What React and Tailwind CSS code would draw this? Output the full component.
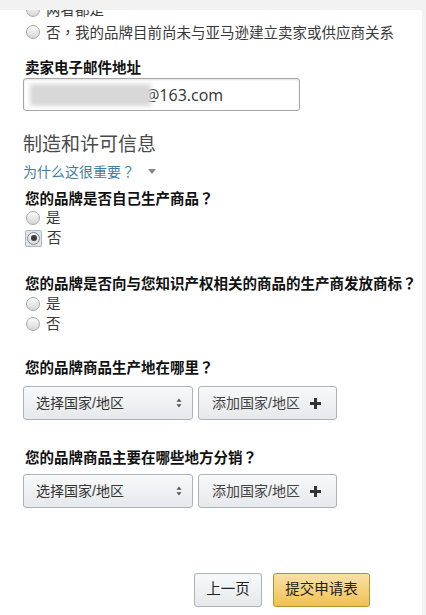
import React from "react";

const font = "font-['Liberation_Sans','Noto_Sans_CJK_SC',sans-serif]";

// full-width punctuation centred in the em box, like the reference
function Q() {
  return <span className="font-['Noto_Sans_CJK_TC',sans-serif]">？</span>;
}

function Radio({ checked }) {
  if (checked) {
    return (
      <span className="w-[17px] h-[17px] -ml-[1px] -mr-[1px] rounded-[2px] bg-[#dfe5ec] border border-[#a9b8c8] flex items-center justify-center">
        <span className="w-[13px] h-[13px] rounded-full border border-[#8e8e8e] bg-gradient-to-b from-[#f2f2f2] to-[#d8d8d8] flex items-center justify-center">
          <span className="w-[6px] h-[6px] rounded-full bg-[#3c3c3c]" />
        </span>
      </span>
    );
  }
  return (
    <span className="w-[14px] h-[14px] rounded-full border border-[#a8a8a8] bg-gradient-to-b from-[#fbfbfb] to-[#d6d6d6]" />
  );
}

function Option({ label, checked, className = "" }) {
  return (
    <div className={`h-[20px] flex items-center gap-[6px] pl-[3px] ${className}`}>
      <Radio checked={checked} />
      <span className="text-[14.5px] leading-[20px] text-[#3a3a3a] whitespace-nowrap">{label}</span>
    </div>
  );
}

function Question({ children, className = "" }) {
  return (
    <p className={`h-[20px] text-[14.5px] leading-[20px] font-bold text-[#111] whitespace-nowrap pl-[2px] ${className}`}>
      {children}
    </p>
  );
}

function UpDown() {
  return (
    <svg width="6" height="10" viewBox="0 0 6 10" className="text-[#555]">
      <path d="M3 0.5 L5.5 3.8 H0.5 Z" fill="currentColor" />
      <path d="M3 9.5 L5.5 6.2 H0.5 Z" fill="currentColor" />
    </svg>
  );
}

function CountryRow({ className = "" }) {
  return (
    <div className={`flex gap-[5px] ${className}`}>
      <div className="w-[170px] h-[34px] rounded-[3px] border border-[#adb1b8] bg-gradient-to-b from-[#f8f9fa] to-[#e6e8eb] flex items-center justify-between pl-[12px] pr-[10px]">
        <span className="text-[14px] text-[#333]">选择国家/地区</span>
        <UpDown />
      </div>
      <div className="w-[139px] h-[34px] rounded-[3px] border border-[#adb1b8] bg-gradient-to-b from-[#f8f9fa] to-[#e6e8eb] flex items-center pl-[13px] gap-[9px]">
        <span className="text-[14px] text-[#444]">添加国家/地区</span>
        <svg width="13" height="13" viewBox="0 0 13 13">
          <path d="M6.5 1 V12 M1 6.5 H12" stroke="#333" strokeWidth="3" />
        </svg>
      </div>
    </div>
  );
}

export default function App() {
  return (
    <div className={`w-[426px] h-[615px] bg-[#f2f2f2] pt-[10px] overflow-hidden ${font}`}>
      <div className="w-[422px] h-full bg-white overflow-hidden pl-[23px]">
        {/* radio options (top, cut off by the scroll) */}
        <div className="-mt-[11px]">
          <Option label="两者都是" className="h-[22px]" />
          <Option
            label={<>否<span className="font-['Noto_Sans_CJK_TC',sans-serif]">，</span>我的品牌目前尚未与亚马逊建立卖家或供应商关系</>}
            className="h-[22px]"
          />
        </div>

        {/* seller email */}
        <Question className="mt-[15px]">卖家电子邮件地址</Question>
        <div className="w-[277px] h-[33px] rounded-[3px] border border-[#a6a6a6] shadow-[inset_0_1px_2px_rgba(0,0,0,0.12)] flex items-center pl-[6px]">
          <div className="relative z-10 w-[121px] h-[22px] bg-[#d8d8d8] blur-[2px]" />
          <span className="-ml-[6px] text-[16px] text-[#333] font-['Open_Sans','Liberation_Sans',sans-serif]">@163.com</span>
        </div>

        {/* manufacturing */}
        <h2 className="mt-[21px] h-[26px] text-[19px] leading-[26px] text-[#4a4a4a] font-normal">制造和许可信息</h2>
        <div className="mt-[3px] h-[20px] flex items-center gap-[13px]">
          <span className="text-[14px] leading-[20px] text-[#3f7fa3]">为什么这很重要<Q /></span>
          <svg width="8" height="5" viewBox="0 0 8 5">
            <path d="M0 0 H8 L4 5 Z" fill="#888" />
          </svg>
        </div>

        <Question className="mt-[7px]">您的品牌是否自己生产商品<Q /></Question>
        <Option label="是" />
        <Option label="否" checked />

        <Question className="mt-[25px]">您的品牌是否向与您知识产权相关的商品的生产商发放商标<Q /></Question>
        <Option label="是" className="mt-[1px]" />
        <Option label="否" />

        <Question className="mt-[23px]">您的品牌商品生产地在哪里<Q /></Question>
        <CountryRow className="mt-[9px]" />

        <Question className="mt-[27px]">您的品牌商品主要在哪些地方分销<Q /></Question>
        <CountryRow className="mt-[7px]" />

        {/* footer buttons */}
        <div className="mt-[65px] ml-[171px] flex gap-[11px]">
          <button className="w-[68px] h-[34px] rounded-[3px] border border-[#adb1b8] bg-gradient-to-b from-[#f8f9fa] to-[#e6e8eb] text-[14.5px] text-[#222]">
            上一页
          </button>
          <button className="w-[97px] h-[34px] rounded-[3px] border border-[#b8912f] bg-gradient-to-b from-[#f8e0a6] to-[#f0c14b] text-[14.5px] text-[#222]">
            提交申请表
          </button>
        </div>
      </div>
    </div>
  );
}
